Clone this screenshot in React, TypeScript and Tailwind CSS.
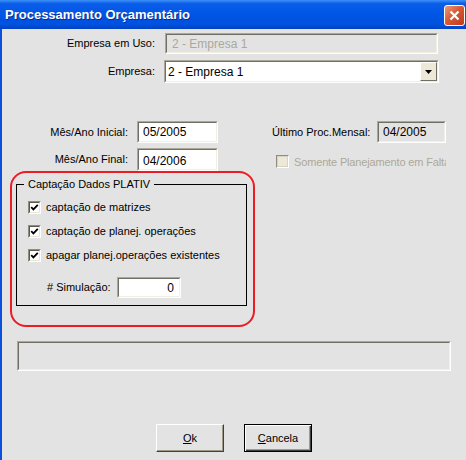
import React from "react";

const outer =
  "border border-t-[#aca899] border-l-[#aca899] border-b-white border-r-white";
const inner =
  "border border-t-[#716f64] border-l-[#716f64] border-b-[#f1efe2] border-r-[#f1efe2]";

function Sunken({
  className,
  bg = "bg-white",
  children,
}: {
  className: string;
  bg?: string;
  children?: React.ReactNode;
}) {
  return (
    <div className={`${outer} ${className}`}>
      <div className={`${inner} ${bg} w-full h-full flex items-center overflow-hidden`}>
        {children}
      </div>
    </div>
  );
}

function Check({ checked = true, disabled = false }: { checked?: boolean; disabled?: boolean }) {
  return (
    <div className="w-[13px] h-[13px] border border-t-[#8e8c7f] border-l-[#8e8c7f] border-b-white border-r-white shrink-0">
      <div
        className={`w-full h-full border ${
          disabled
            ? "border-[#d6d3c6] bg-[#ece9d8]"
            : "border-t-[#5c5a50] border-l-[#5c5a50] border-b-[#e9e7dd] border-r-[#e9e7dd] bg-white"
        } flex items-center justify-center`}
      >
        {checked && (
          <svg width="9" height="9" viewBox="0 0 9 9">
            <path d="M1.2 4.2 L3.4 6.4 L7.8 1.8" stroke="#000" strokeWidth="1.8" fill="none" />
          </svg>
        )}
      </div>
    </div>
  );
}

export default function App() {
  return (
    <div className="w-[466px] h-[460px] bg-[#e3e3e3] flex flex-col overflow-hidden font-['Liberation_Sans',Arial,sans-serif] text-black">
      {/* barra de título */}
      <div className="h-[29px] shrink-0 flex bg-[linear-gradient(to_bottom,#3f92f8_0%,#0a5ee9_12%,#0055e5_50%,#0051de_85%,#0042c0_100%)]">
        <div className="pl-[5px] self-center text-white font-bold text-[13px] [text-shadow:1px_1px_0_#0a2b8c]">
          Processamento Orçamentário
        </div>
        <div className="ml-auto mr-px mt-[5px] w-[21px] h-[21px] rounded-[3px] border border-white bg-[linear-gradient(135deg,#ec9a7c_0%,#d85a34_45%,#c2391a_100%)] flex items-center justify-center">
          <svg width="11" height="11" viewBox="0 0 11 11">
            <path d="M1.5 1.5 L9.5 9.5 M9.5 1.5 L1.5 9.5" stroke="#fff" strokeWidth="2.2" />
          </svg>
        </div>
      </div>

      <div className="flex-1 border-l-2 border-[#0b4fdc] flex flex-col text-[11px]">
        {/* Empresa em uso */}
        <div className="mt-[4px] flex items-center">
          <div className="w-[153px] text-right">Empresa em Uso:</div>
          <Sunken className="ml-[10px] w-[273px] h-[21px]" bg="bg-[#e3e3e3]">
            <span className="pl-[5px] text-[12px] text-[#aca899]">2 - Empresa 1</span>
          </Sunken>
        </div>

        {/* Empresa */}
        <div className="mt-[6px] flex items-center">
          <div className="w-[153px] text-right">Empresa:</div>
          <Sunken className="ml-[9px] w-[275px] h-[23px]">
            <span className="pl-[2px] text-[12px] flex-1">2 - Empresa 1</span>
            <div className="w-[17px] h-full border border-t-white border-l-white border-b-[#716f64] border-r-[#716f64] bg-[#ece9d8] flex items-center justify-center">
              <svg width="7" height="4" viewBox="0 0 7 4">
                <path d="M0 0 H7 L3.5 4 Z" fill="#000" />
              </svg>
            </div>
          </Sunken>
        </div>

        {/* Mês/Ano inicial */}
        <div className="mt-[38px] flex items-center">
          <div className="w-[126px] text-right">Mês/Ano Inicial:</div>
          <Sunken className="ml-[9px] w-[81px] h-[22px]">
            <span className="pl-[4px] text-[12px]">05/2005</span>
          </Sunken>
          <div className="ml-[54px] w-[95px] whitespace-nowrap">Último Proc.Mensal:</div>
          <Sunken className="ml-[10px] w-[69px] h-[22px]" bg="bg-[#e3e3e3]">
            <span className="pl-[4px] text-[12px]">04/2005</span>
          </Sunken>
        </div>

        {/* Mês/Ano final */}
        <div className="mt-[5px] flex items-center">
          <div className="w-[126px] text-right">Mês/Ano Final:</div>
          <Sunken className="ml-[9px] w-[81px] h-[23px]">
            <span className="pl-[4px] pt-[2px] text-[12px]">04/2006</span>
          </Sunken>
          <div className="ml-[58px] self-end mb-px flex items-center">
            <Check checked={false} disabled />
            <div className="ml-[5px] w-[152px] overflow-hidden whitespace-nowrap tracking-[-0.15px] text-[#aca899]">
              Somente Planejamento em Falta
            </div>
          </div>
        </div>

        {/* destaque vermelho + grupo */}
        <div className="ml-[8px] w-[245px] h-[156px] border-2 border-[#ec1c24] rounded-[16px] pl-[4px] pt-[4px]">
          <fieldset className="w-[231px] border border-black pb-[7px]">
            <legend className="ml-[7px] px-[4px] leading-[14px]">Captação Dados PLATIV</legend>
            <div className="mt-[8px] h-[17px] flex items-center pl-[11px]">
              <Check />
              <span className="ml-[5px]">captação de matrizes</span>
            </div>
            <div className="mt-[7px] h-[17px] flex items-center pl-[11px]">
              <Check />
              <span className="ml-[5px]">captação de planej. operações</span>
            </div>
            <div className="mt-[7px] h-[17px] flex items-center pl-[11px]">
              <Check />
              <span className="ml-[5px]">apagar planej.operações existentes</span>
            </div>
            <div className="mt-[13px] flex items-center pl-[30px]">
              <div className="w-[62px] whitespace-nowrap"># Simulação:</div>
              <Sunken className="ml-[8px] w-[64px] h-[21px]">
                <span className="w-full pr-[5px] text-right text-[12px]">0</span>
              </Sunken>
            </div>
          </fieldset>
        </div>

        {/* status */}
        <Sunken className="mt-[14px] ml-[15px] w-[434px] h-[30px]" bg="bg-[#e3e3e3]" />

        {/* botões */}
        <div className="mt-[53px] flex justify-center gap-[20px]">
          <button className="w-[68px] h-[28px] border border-t-white border-l-white border-b-[#404040] border-r-[#404040] shadow-[inset_-1px_-1px_0_#9d9a8a] bg-[#e3e3e3] text-[11px]">
            <span className="underline">O</span>k
          </button>
          <button className="w-[68px] h-[28px] border border-black shadow-[inset_1px_1px_0_#fff,inset_-1px_-1px_0_#404040,inset_-2px_-2px_0_#9d9a8a] bg-[#e3e3e3] text-[11px]">
            <span className="underline">C</span>ancela
          </button>
        </div>
      </div>
    </div>
  );
}
